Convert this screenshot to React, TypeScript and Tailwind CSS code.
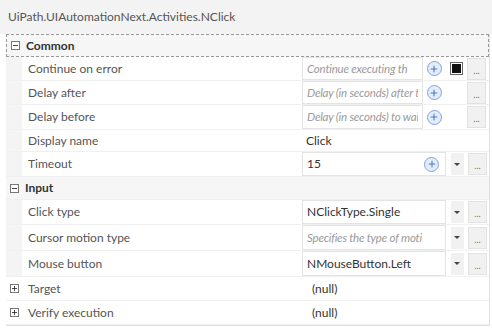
import { Plus } from "lucide-react";

type Row = {
  label: string;
  value?: string;
  placeholder?: string;
  box?: "short" | "long" | "none";
  plusInside?: boolean;
  check?: boolean;
  h: number;
};

const common: Row[] = [
  { label: "Continue on error", placeholder: "Continue executing th", box: "short", check: true, h: 24 },
  { label: "Delay after", placeholder: "Delay (in seconds) after t.", box: "short", h: 24 },
  { label: "Delay before", placeholder: "Delay (in seconds) to wai", box: "short", h: 25 },
  { label: "Display name", value: "Click", box: "none", h: 22 },
  { label: "Timeout", value: "15", box: "long", plusInside: true, h: 25 },
];

const input: Row[] = [
  { label: "Click type", value: "NClickType.Single", box: "long", h: 25 },
  { label: "Cursor motion type", placeholder: "Specifies the type of moti", box: "long", h: 26 },
  { label: "Mouse button", value: "NMouseButton.Left", box: "long", h: 26 },
];

function PlusCircle() {
  return (
    <span className="flex h-[15px] w-[15px] shrink-0 items-center justify-center rounded-full border border-[#7fa3dc] bg-[#e4edfb] text-[#4a78c8]">
      <Plus size={10} strokeWidth={2.5} />
    </span>
  );
}

function Dots() {
  return (
    <span className="flex h-[22px] w-[19px] shrink-0 items-end justify-center border border-[#e2e2e2] bg-[#f1f1f1] pb-[4px] text-[9px] leading-none text-[#777]">
      ...
    </span>
  );
}

function Arrow() {
  return (
    <span className="flex h-[22px] w-[13px] items-center justify-center bg-[#f1f1f1]">
      <span className="h-0 w-0 border-x-[3px] border-t-[3px] border-x-transparent border-t-[#444]" />
    </span>
  );
}

function Toggle() {
  return (
    <span className="flex h-[13px] w-[13px] items-center justify-center border border-[#666] bg-white">
      <span className="h-[9px] w-[9px] bg-[#111]" />
    </span>
  );
}

function Expander({ open }: { open: boolean }) {
  return (
    <span className="relative flex h-[9px] w-[9px] items-center justify-center border border-[#777] bg-white">
      <span className="absolute h-px w-[5px] bg-[#444]" />
      {!open && <span className="absolute h-[5px] w-px bg-[#444]" />}
    </span>
  );
}

function PropRow({ r }: { r: Row }) {
  const text = r.value ? (
    <span className="text-[#333]">{r.value}</span>
  ) : (
    <span className="text-[11.5px] tracking-[-0.2px] italic text-[#9a9a9a]">{r.placeholder}</span>
  );
  return (
    <div className="flex border-b border-[#f0f0f0]" style={{ height: r.h }}>
      <div className="w-[16px] shrink-0 bg-[#f4f4f4]" />
      <div className="flex w-[280px] shrink-0 items-center pl-[6px] text-[#555]">{r.label}</div>
      <div className="flex min-w-0 flex-1 items-center pr-[2px]">
        {r.box === "none" && <span className="pl-[4px] text-[#333]">{r.value}</span>}
        {r.box === "short" && (
          <>
            <div className="flex h-full w-[121px] min-w-0 shrink-0 items-center border border-[#e4e4e4] px-[4px]">
              <div className="min-w-0 flex-1 overflow-hidden whitespace-nowrap">{text}</div>
            </div>
            <div className="flex w-[22px] shrink-0 justify-center"><PlusCircle /></div>
            <div className="flex w-[22px] shrink-0 justify-center">{r.check && <Toggle />}</div>
            <Dots />
          </>
        )}
        {r.box === "long" && (
          <>
            <div className="flex h-full w-[144px] min-w-0 shrink-0 items-center border border-[#e4e4e4] pl-[4px] pr-[6px]">
              <div className="min-w-0 flex-1 overflow-hidden whitespace-nowrap">{text}</div>
              {r.plusInside && <PlusCircle />}
            </div>
            <div className="flex w-[22px] shrink-0 justify-center"><Arrow /></div>
            <Dots />
          </>
        )}
      </div>
    </div>
  );
}

function Group({ title, focus }: { title: string; focus?: boolean }) {
  return (
    <div
      className={`flex h-[23px] items-center gap-[6px] bg-[#f6f6f6] pl-[4px] font-bold text-[#333] ${
        focus ? "border border-dashed border-[#9a9a9a]" : "border-b border-[#f0f0f0]"
      }`}
    >
      <Expander open />
      {title}
    </div>
  );
}

function Collapsed({ label }: { label: string }) {
  return (
    <div className="flex h-[24px] items-center border-b border-[#f0f0f0]">
      <div className="flex w-[22px] shrink-0 items-center pl-[4px]">
        <Expander open={false} />
      </div>
      <div className="w-[280px] shrink-0 text-[#555]">{label}</div>
      <div className="pl-[4px] text-[#333]">(null)</div>
    </div>
  );
}

export default function App() {
  return (
    <div className="h-[332px] w-[492px] overflow-hidden bg-white font-['Lato',sans-serif] text-[12px]">
      <div className="flex h-[34px] items-center bg-[#f3f3f3] pl-[8px] text-[12px] text-[#555]">
        UiPath.UIAutomationNext.Activities.NClick
      </div>
      <div className="ml-[6px] mr-[2px] border-r border-b border-[#e0e0e0]">
        <Group title="Common" focus />
        {common.map((r) => (
          <PropRow key={r.label} r={r} />
        ))}
        <Group title="Input" />
        {input.map((r) => (
          <PropRow key={r.label} r={r} />
        ))}
        <Collapsed label="Target" />
        <Collapsed label="Verify execution" />
      </div>
    </div>
  );
}
